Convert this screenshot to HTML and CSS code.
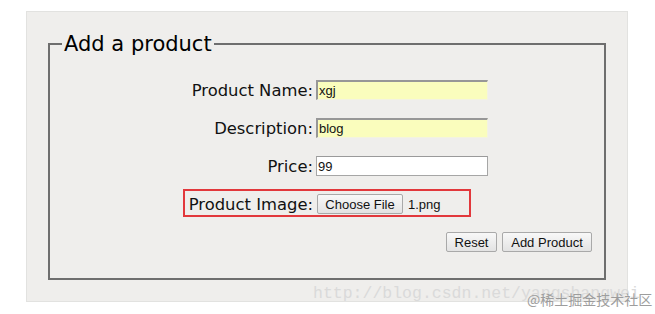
FILE: index.html
```html
<!DOCTYPE html>
<html>
<head>
<meta charset="utf-8">
<link rel="stylesheet" href="styles.css">
</head>
<body>
<div class="page">
  <div class="panel">
    <form class="form">
      <fieldset class="box">
        <legend class="title">Add a product</legend>
        <div class="grid">
          <label class="lbl">Product Name:</label>
          <input class="field autofill" type="text" value="xgj">
          <label class="lbl">Description:</label>
          <input class="field autofill" type="text" value="blog">
          <label class="lbl">Price:</label>
          <input class="field" type="text" value="99">
          <label class="lbl">Product Image:</label>
          <div class="file"><button class="btn" type="button">Choose File</button><span class="fname">1.png</span></div>
          <div class="actions">
            <button class="btn" type="reset">Reset</button>
            <button class="btn" type="button">Add Product</button>
          </div>
          <div class="mark"></div>
        </div>
      </fieldset>
    </form>
  </div>
  <div class="wm-url">http://blog.csdn.net/yangshangwei</div>
  <div class="wm-tag">@稀土掘金技术社区</div>
</div>
</body>
</html>
```
FILE: styles.css
```css
html, body {
  margin: 0;
  padding: 0;
  background: #ffffff;
}

.page {
  position: relative;
  width: 655px;
  height: 314px;
  padding-top: 11px;
  box-sizing: border-box;
}

.panel {
  margin-left: 26px;
  width: 602px;
  box-sizing: border-box;
  background: #efeeec;
  border: 1px solid #e2e2e0;
  padding: 20px 21px 21px 21px;
}

.form {
  margin: 0;
}

.box {
  margin: 0;
  border: 2px solid #6e6e6e;
  padding: 24px 12px 26px 12px;
  min-width: 0;
}

.title {
  font-family: "DejaVu Sans", Verdana, sans-serif;
  font-size: 21px;
  line-height: 24px;
  color: #000;
  padding: 0 2px;
}

.grid {
  position: relative;
  display: grid;
  grid-template-columns: 251px 1fr;
  grid-auto-rows: 20px;
  column-gap: 3px;
  row-gap: 18px;
}

.lbl {
  font-family: "DejaVu Sans", Verdana, sans-serif;
  font-size: 16.4px;
  line-height: 22px;
  color: #111;
  text-align: right;
  white-space: nowrap;
}

.field {
  box-sizing: border-box;
  width: 172px;
  height: 20px;
  margin: 0;
  padding: 0 1px;
  font-family: "Liberation Sans", Arial, sans-serif;
  font-size: 13px;
  color: #111;
  background: #ffffff;
  border: 1px solid #a6a6a6;
  border-top-color: #9a9a9a;
  outline: none;
}

.autofill {
  background: #fafdbd;
  border-width: 2px 1px 1px 2px;
  border-color: #979797 #f3f3e0 #f3f3e0 #979797;
}

.file {
  display: flex;
  align-items: center;
  gap: 5px;
  padding-left: 1px;
}

.fname {
  font-family: "Liberation Sans", Arial, sans-serif;
  font-size: 13px;
  color: #111;
}

.btn {
  box-sizing: border-box;
  height: 20px;
  margin: 0;
  padding: 0 6px;
  font-family: "Liberation Sans", Arial, sans-serif;
  font-size: 13px;
  color: #111;
  background: linear-gradient(#f8f8f8, #e3e3e3);
  border: 1px solid #a9a9a9;
  border-radius: 2px;
}

.file .btn {
  width: 86px;
}

.actions {
  grid-column: 1 / -1;
  display: flex;
  justify-content: flex-end;
  gap: 5px;
}

.actions .btn:first-child {
  width: 51px;
}

.actions .btn:last-child {
  width: 90px;
}

.mark {
  position: absolute;
  left: 121px;
  top: 109px;
  width: 288px;
  height: 28px;
  box-sizing: border-box;
  border: 2px solid #e2383c;
  pointer-events: none;
}

.wm-url {
  position: absolute;
  left: 313px;
  top: 284px;
  font-family: "Liberation Mono", "Courier New", monospace;
  font-size: 16.5px;
  line-height: 20px;
  color: #dadada;
  white-space: nowrap;
}

.wm-tag {
  position: absolute;
  left: 527px;
  top: 290px;
  font-family: "Noto Sans CJK SC", sans-serif;
  font-size: 14px;
  line-height: 18px;
  color: #9d9d9d;
  white-space: nowrap;
}
```
